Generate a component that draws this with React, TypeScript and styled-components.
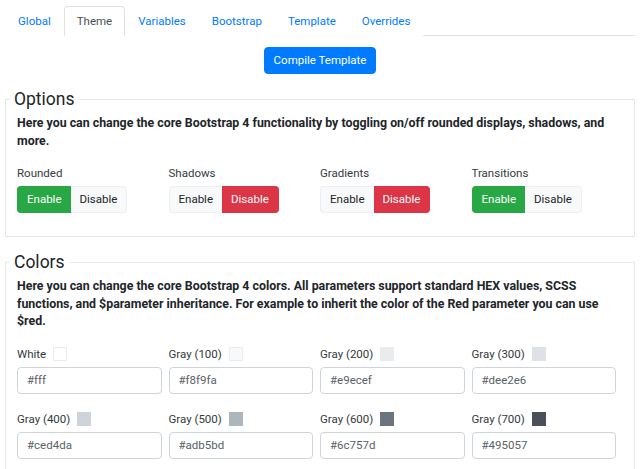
import React from 'react';
import styled, { createGlobalStyle } from 'styled-components';

const GlobalStyle = createGlobalStyle`
    body {
        margin: 0;
        background: #fff;
        font-family: Roboto, "Noto Sans", sans-serif;
        font-size: 11.5px;
        color: #212529;
    }
`;

const Page = styled.div`
    padding: 6px 5px 0;
`;

const Tabs = styled.ul`
    display: flex;
    margin: 0;
    padding: 0;
    list-style: none;
    border-bottom: 1px solid #dee2e6;
`;

const Tab = styled.li<{ active?: boolean }>`
    margin-bottom: -1px;
    padding: 5.5px 12px;
    line-height: 17px;
    border: 1px solid ${p => (p.active ? '#dee2e6' : 'transparent')};
    border-bottom-color: ${p => (p.active ? '#fff' : 'transparent')};
    border-radius: 4px 4px 0 0;
    background: #fff;
    color: ${p => (p.active ? '#495057' : '#007bff')};
    cursor: pointer;
`;

const Toolbar = styled.div`
    display: flex;
    justify-content: center;
    margin-top: 11px;
`;

const PrimaryButton = styled.button`
    height: 27px;
    padding: 0 9px;
    border: 1px solid #007bff;
    border-radius: 4px;
    background: #007bff;
    color: #fff;
    font: inherit;
    line-height: 17px;
`;

const Fieldset = styled.fieldset`
    margin: 14px 0 0;
    padding: 5px 11px 23px;
    min-width: 0;
    border: 1px solid #e6e9ec;
`;

const Legend = styled.legend`
    margin-left: -7px;
    padding: 0 4px;
    font-size: 17.5px;
    line-height: 22px;
    color: #212529;
`;

const Lead = styled.p`
    margin: 0 0 14px;
    font-size: 12.37px;
    font-weight: 700;
    line-height: 17.5px;
    color: #212529;
`;

const Grid = styled.div<{ rowGap: number }>`
    display: grid;
    grid-template-columns: repeat(4, 1fr);
    row-gap: ${p => p.rowGap}px;
`;

const Cell = styled.div`
    display: flex;
    flex-direction: column;
    align-items: flex-start;
    gap: 4px;
    padding-right: 7px;
`;

const Label = styled.div`
    display: flex;
    align-items: center;
    gap: 7px;
    height: 18px;
    color: #343a40;
`;

const Swatch = styled.span<{ color: string }>`
    width: 14px;
    height: 14px;
    box-sizing: border-box;
    background: ${p => p.color};
    border: 1px solid ${p => (p.color === '#fff' || p.color === '#f8f9fa' ? '#e9ecef' : p.color)};
`;

const Group = styled.div`
    display: flex;
`;

const ToggleButton = styled.button<{ tone: 'on' | 'off' | 'idle' }>`
    height: 27px;
    padding: 0 9px;
    font: inherit;
    line-height: 17px;
    border: 1px solid ${p => (p.tone === 'on' ? '#28a745' : p.tone === 'off' ? '#dc3545' : '#eceef0')};
    background: ${p => (p.tone === 'on' ? '#28a745' : p.tone === 'off' ? '#dc3545' : '#f8f9fa')};
    color: ${p => (p.tone === 'idle' ? '#212529' : '#fff')};
    &:first-child {
        border-radius: 4px 0 0 4px;
        border-right-width: 0;
    }
    &:last-child {
        border-radius: 0 4px 4px 0;
        border-left-width: 0;
    }
`;

const Input = styled.input`
    width: 100%;
    height: 27px;
    box-sizing: border-box;
    padding: 0 9px;
    border: 1px solid #ced4da;
    border-radius: 4px;
    font: inherit;
    color: #5a6268;
    background: #fff;
`;

const options = [
    { name: 'Rounded', enabled: true },
    { name: 'Shadows', enabled: false },
    { name: 'Gradients', enabled: false },
    { name: 'Transitions', enabled: true },
];

const colors = [
    { name: 'White', value: '#fff' },
    { name: 'Gray (100)', value: '#f8f9fa' },
    { name: 'Gray (200)', value: '#e9ecef' },
    { name: 'Gray (300)', value: '#dee2e6' },
    { name: 'Gray (400)', value: '#ced4da' },
    { name: 'Gray (500)', value: '#adb5bd' },
    { name: 'Gray (600)', value: '#6c757d' },
    { name: 'Gray (700)', value: '#495057' },
];

const tabs = ['Global', 'Theme', 'Variables', 'Bootstrap', 'Template', 'Overrides'];

const App = () => {
    return (
        <Page>
            <GlobalStyle />
            <Tabs>
                {tabs.map(t => (
                    <Tab key={t} active={t === 'Theme'}>{t}</Tab>
                ))}
            </Tabs>

            <Toolbar>
                <PrimaryButton>Compile Template</PrimaryButton>
            </Toolbar>

            <Fieldset>
                <Legend>Options</Legend>
                <Lead>
                    Here you can change the core Bootstrap 4 functionality by toggling on/off rounded displays, shadows, and more.
                </Lead>
                <Grid rowGap={16}>
                    {options.map(o => (
                        <Cell key={o.name}>
                            <Label>{o.name}</Label>
                            <Group>
                                <ToggleButton tone={o.enabled ? 'on' : 'idle'}>Enable</ToggleButton>
                                <ToggleButton tone={o.enabled ? 'idle' : 'off'}>Disable</ToggleButton>
                            </Group>
                        </Cell>
                    ))}
                </Grid>
            </Fieldset>

            <Fieldset>
                <Legend>Colors</Legend>
                <Lead>
                    Here you can change the core Bootstrap 4 colors. All parameters support standard HEX values, SCSS functions, and $parameter inheritance. For example to inherit the color of the Red parameter you can use $red.
                </Lead>
                <Grid rowGap={16}>
                    {colors.map(c => (
                        <Cell key={c.name}>
                            <Label>
                                {c.name}
                                <Swatch color={c.value} />
                            </Label>
                            <Input defaultValue={c.value} />
                        </Cell>
                    ))}
                </Grid>
            </Fieldset>
        </Page>
    );
};

export default App;
